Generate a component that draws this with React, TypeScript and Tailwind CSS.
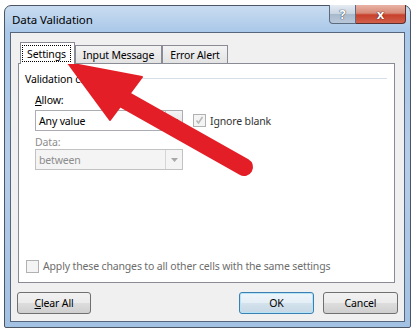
export default function App() {
  return (
    <div className="relative w-[414px] h-[333px] overflow-hidden bg-white font-['Noto_Sans',sans-serif] text-[10.5px] tracking-[-0.15px] leading-[14px] text-black">
      {/* window frame */}
      <div className="ml-[4px] mt-[5px] w-[407px] h-[323px] rounded-t-[7px] rounded-b-[2px] border border-[#4b5563] bg-[linear-gradient(180deg,#c9dcf0_0%,#aac8e9_8%,#b4cdea_50%,#a3c1e3_100%)] flex flex-col px-[5px] pb-[5px]">
        {/* title bar */}
        <div className="h-[26px] flex items-start justify-between">
          <span className="mt-[7px] ml-[2px] text-[11.5px] tracking-[-0.1px] leading-[14px] text-black">Data Validation</span>
          <div className="flex -mt-px -mr-[1px]">
            <div className="w-[27px] h-[19px] rounded-bl-[4px] border border-t-0 border-[#5b6b80] bg-[linear-gradient(180deg,#e4ebf3_0%,#c8d4e1_50%,#a9b9cc_51%,#b9c8d9_100%)] flex items-center justify-center">
              <span className="text-[13px] font-bold leading-none text-white [text-shadow:0_0_1px_#2b3a4a,0_0_1px_#2b3a4a]">?</span>
            </div>
            <div className="w-[50px] h-[19px] rounded-br-[4px] border border-l-0 border-t-0 border-[#5b3030] bg-[linear-gradient(180deg,#e8b3a6_0%,#d88a78_45%,#c7402c_55%,#d2604a_100%)] flex items-center justify-center">
              <span className="text-[13px] font-bold leading-none text-white [text-shadow:0_0_1px_#4a1010,0_0_1px_#4a1010]">x</span>
            </div>
          </div>
        </div>

        {/* client area */}
        <div className="flex-1 border border-[#55667d] bg-[#f0f0f0] flex flex-col">
          <div className="pl-[7px] pt-[9px]">
            {/* tabs */}
            <div className="relative z-10 flex items-end ml-[2px] -mb-px">
              <div className="w-[55px] h-[22px] border border-b-0 border-[#898c95] bg-white pl-px pt-[2px]">
                <div className="w-[49px] h-[17px] border border-dotted border-black flex items-center justify-center">
                  Settings
                </div>
              </div>
              <div className="w-[87px] h-[19px] border border-[#898c95] bg-[linear-gradient(180deg,#f3f3f3,#e3e3e3)] flex items-center justify-center">
                Input Message
              </div>
              <div className="w-[66px] h-[19px] border border-[#898c95] bg-[linear-gradient(180deg,#f3f3f3,#e3e3e3)] flex items-center justify-center">
                Error Alert
              </div>
            </div>

            {/* tab panel */}
            <div className="w-[377px] h-[220px] border border-[#898c95] bg-white flex flex-col px-[6px] pt-[8px] pb-[9px]">
              <div className="flex items-center gap-[4px] pr-[1px]">
                <span>Validation criteria</span>
                <div className="flex-1 h-[2px] border-t border-[#d5dfe5] border-b-white border-b" />
              </div>

              <div className="ml-[10px] mt-[7px]">
                <span><span className="underline">A</span>llow:</span>
              </div>
              <div className="ml-[10px] mt-[3px] flex items-center">
                <div className="w-[148px] h-[21px] border border-[#abadb3] bg-white flex items-stretch">
                  <span className="flex-1 pl-[3px] flex items-center">Any value</span>
                  <div className="w-[17px] border-l border-[#c5c5c5] bg-[linear-gradient(180deg,#f4f4f4,#dcdcdc)] flex items-center justify-center">
                    <svg width="7" height="4" viewBox="0 0 7 4"><path d="M0 0h7L3.5 4z" fill="#000" /></svg>
                  </div>
                </div>
                <div className="ml-[10px] w-[13px] h-[13px] border border-[#b1b1b1] bg-[#f4f4f4] flex items-center justify-center">
                  <svg width="9" height="9" viewBox="0 0 9 9"><path d="M1.5 4.5l2 2.5 4-6" stroke="#b8b8b8" strokeWidth="1.6" fill="none" /></svg>
                </div>
                <span className="ml-[4px] text-[#333]">Ignore blank</span>
              </div>

              <div className="ml-[10px] mt-[4px] text-[#8d8d8d]">Data:</div>
              <div className="ml-[10px]">
                <div className="w-[148px] h-[21px] border border-[#c2c2c2] bg-[#f4f4f4] flex items-stretch">
                  <span className="flex-1 pl-[3px] flex items-center text-[#8d8d8d]">between</span>
                  <div className="w-[17px] border-l border-[#d5d5d5] flex items-center justify-center">
                    <svg width="7" height="4" viewBox="0 0 7 4"><path d="M0 0h7L3.5 4z" fill="#a8a8a8" /></svg>
                  </div>
                </div>
              </div>

              <div className="mt-auto flex items-center ml-[1px]">
                <div className="w-[13px] h-[13px] border border-[#b1b1b1] bg-[#f4f4f4]" />
                <span className="ml-[4px] text-[#6d6d6d]">Apply these changes to all other cells with the same settings</span>
              </div>
            </div>
          </div>

          {/* buttons */}
          <div className="flex items-center mt-[9px] pl-[6px] pr-[6px]">
            <div className="w-[74px] h-[22px] rounded-[3px] border border-[#707070] bg-[linear-gradient(180deg,#f2f2f2_0%,#ebebeb_50%,#dddddd_51%,#cfcfcf_100%)] flex items-center justify-center">
              <span><span className="underline">C</span>lear All</span>
            </div>
            <div className="ml-auto w-[75px] h-[22px] rounded-[3px] border border-[#3c7fb1] shadow-[inset_0_0_0_1px_#b5e4f8] bg-[linear-gradient(180deg,#eef6fb_0%,#e4eef5_50%,#d3e2ec_51%,#c6d8e5_100%)] flex items-center justify-center">
              OK
            </div>
            <div className="ml-[9px] w-[75px] h-[22px] rounded-[3px] border border-[#707070] bg-[linear-gradient(180deg,#f2f2f2_0%,#ebebeb_50%,#dddddd_51%,#cfcfcf_100%)] flex items-center justify-center">
              Cancel
            </div>
          </div>
        </div>
      </div>

      {/* red annotation arrow */}
      <svg className="absolute inset-0 pointer-events-none" width="414" height="333" viewBox="0 0 414 333">
        <path d="M68 63 L142 77 L110 120 Z" fill="#e41e26" stroke="#e41e26" strokeWidth="2" strokeLinejoin="round" />
        <line x1="118" y1="96" x2="244" y2="167" stroke="#e41e26" strokeWidth="18" strokeLinecap="round" />
      </svg>
    </div>
  );
}
